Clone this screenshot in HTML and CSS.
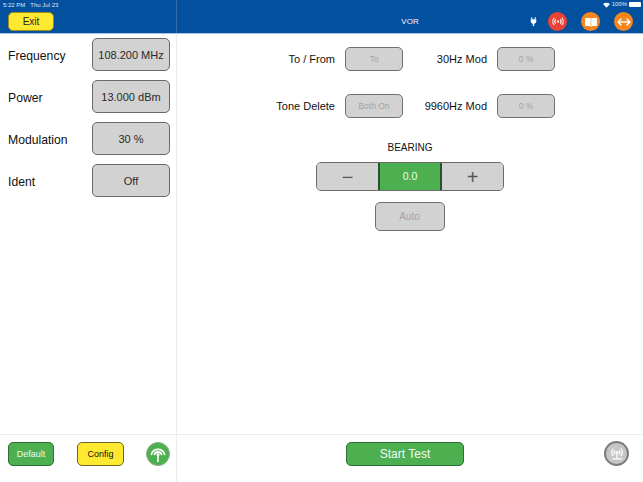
FILE: index.html
```html
<!DOCTYPE html>
<html lang="en">
<head>
<meta charset="utf-8">
<title>VOR</title>
<link rel="stylesheet" href="styles.css">
</head>
<body>
<div class="app">
  <header class="top">
    <div class="top-left">
      <div class="status-left"><span>5:22 PM</span><span>Thu Jul 23</span></div>
      <button class="btn exit">Exit</button>
    </div>
    <div class="top-right">
      <div class="status-right">
        <svg width="7" height="6" viewBox="0 0 9 7"><path d="M4.5 7 L0 2.2 Q4.5 -1 9 2.2 Z" fill="#fff"/></svg>
        <span>100%</span>
        <span class="battery"></span>
      </div>
      <div class="title">VOR</div>
      <div class="icons">
        <svg class="plug" width="7" height="9" viewBox="0 0 8 10"><path d="M2 0v2.5M6 0v2.5" stroke="#fff" stroke-width="1.2"/><path d="M0.8 2.5h6.4v2.5a3.2 3 0 0 1-2.4 2.6V10H3.2V7.6A3.2 3 0 0 1 .8 5z" fill="#fff"/></svg>
        <span class="round red">
          <svg width="14" height="9" viewBox="0 0 16 12" fill="none" stroke="#fff" stroke-width="1.4"><circle cx="8" cy="6" r="1.5" fill="#fff" stroke="none"/><path d="M5 3.2a4 4 0 0 0 0 5.6M11 3.2a4 4 0 0 1 0 5.6M3 1.2a7 7 0 0 0 0 9.6M13 1.2a7 7 0 0 1 0 9.6"/></svg>
        </span>
        <span class="round orange">
          <svg width="12" height="10" viewBox="0 0 13 11" fill="#fff"><path d="M0 1h5.8q.4 0 .4.5V11q-.5-1-1.5-1H0zM13 1H7.2q-.4 0-.4.5V11q.5-1 1.5-1H13z"/></svg>
        </span>
        <span class="round orange">
          <svg width="14" height="8" viewBox="0 0 14 8" fill="none" stroke="#fff" stroke-width="1.4" stroke-linecap="round" stroke-linejoin="round"><path d="M1 4h12M4 1L1 4l3 3M10 1l3 3-3 3"/></svg>
        </span>
      </div>
    </div>
  </header>
  <main class="body">
    <aside class="side">
      <div class="side-rows">
        <div class="side-row"><span class="side-label">Frequency</span><button class="btn field">108.200 MHz</button></div>
        <div class="side-row"><span class="side-label">Power</span><button class="btn field">13.000 dBm</button></div>
        <div class="side-row"><span class="side-label">Modulation</span><button class="btn field">30 %</button></div>
        <div class="side-row"><span class="side-label">Ident</span><button class="btn field">Off</button></div>
      </div>
      <footer class="side-foot">
        <button class="btn small green">Default</button>
        <button class="btn small yellow">Config</button>
        <span class="antenna">
          <svg width="18" height="18" viewBox="0 0 18 18" fill="none" stroke="#fff" stroke-width="1.7" stroke-linecap="round"><path d="M9 10v7" stroke-width="1.6" stroke-linecap="butt"/><circle cx="9" cy="9.5" r="1.6" fill="#fff" stroke="none"/><path d="M5.4 9.5a3.8 3.8 0 0 1 7.2 0M2.4 9.5a6.8 6.8 0 0 1 13.2 0"/></svg>
        </span>
      </footer>
    </aside>
    <section class="content">
      <div class="mods">
        <div class="mod-row">
          <div class="pair"><span class="mod-label">To / From</span><button class="btn mod off">To</button></div>
          <div class="pair"><span class="mod-label">30Hz Mod</span><button class="btn mod off">0 %</button></div>
        </div>
        <div class="mod-row">
          <div class="pair"><span class="mod-label">Tone Delete</span><button class="btn mod off">Both On</button></div>
          <div class="pair"><span class="mod-label">9960Hz Mod</span><button class="btn mod off">0 %</button></div>
        </div>
      </div>
      <div class="bearing">
        <div class="bearing-title">BEARING</div>
        <div class="stepper">
          <button class="step">&minus;</button>
          <button class="step value">0.0</button>
          <button class="step">+</button>
        </div>
        <button class="btn auto off">Auto</button>
      </div>
      <footer class="content-foot">
        <button class="btn start">Start Test</button>
        <span class="remote">
          <svg width="18" height="18" viewBox="0 0 22 22" fill="none" stroke="#fff" stroke-width="1.5"><circle cx="11" cy="9" r="1.6" fill="#fff" stroke="none"/><path d="M8.6 6.6a3.4 3.4 0 0 0 0 4.8M13.4 6.6a3.4 3.4 0 0 1 0 4.8M6.4 4.4a6.5 6.5 0 0 0 0 9.2M15.6 4.4a6.5 6.5 0 0 1 0 9.2M11 10v6.5M5 17h12"/></svg>
        </span>
      </footer>
    </section>
  </main>
</div>
</body>
</html>
```
FILE: styles.css
```css
* { box-sizing: border-box; }
html, body { margin: 0; padding: 0; }
body { width: 643px; height: 482px; overflow: hidden; background: #fff; font-family: "Liberation Sans", Arial, sans-serif; color: #111; }
.app { width: 643px; height: 482px; display: flex; flex-direction: column; }
button { font-family: inherit; padding: 0; margin: 0; }

.top { height: 34px; flex: none; display: flex; background: #03509f; border-bottom: 1px solid #a9c3de; color: #fff; }
.top-left { width: 177px; flex: none; border-right: 1px solid #2e6cad; padding: 2px 0 0 8px; }
.status-left { display: flex; gap: 5px; font-size: 6px; line-height: 6px; color: #dfe8f3; margin-left: -5px; }
.top-right { flex: 1; display: flex; align-items: center; position: relative; padding-top: 9px; }
.status-right { position: absolute; top: 1px; right: 2px; display: flex; align-items: center; gap: 2px; font-size: 6px; line-height: 7px; color: #e8eef6; }
.battery { width: 12px; height: 5px; background: #fff; border-radius: 1px; display: block; }
.title { flex: 1; text-align: center; font-size: 8px; color: #f2f6fb; }
.icons { position: absolute; top: 12px; right: 10px; display: flex; align-items: center; gap: 14px; }
.plug { margin-right: -3px; }
.round { width: 19px; height: 19px; border-radius: 50%; display: flex; align-items: center; justify-content: center; }
.round.red { background: #ea4335; }
.round.orange { background: #f7861e; }

.btn { display: flex; align-items: center; justify-content: center; border: 1px solid #6a6a6a; border-radius: 5px; background: #d2d2d2; color: #222; }
.exit { width: 46px; height: 19px; margin-top: 4px; background: #fde92f; border-color: #a08c1e; font-size: 10px; color: #222; }

.body { flex: 1; display: flex; min-height: 0; }
.side { width: 177px; flex: none; border-right: 1px solid #ececec; display: flex; flex-direction: column; }
.side-rows { flex: 1; padding: 4px 6px 0 8px; display: flex; flex-direction: column; gap: 9px; }
.side-row { height: 33px; display: flex; align-items: center; justify-content: space-between; }
.side-label { font-size: 12.2px; color: #111; padding-top: 2px; }
.field { width: 78px; height: 33px; font-size: 11px; color: #2a2a2a; padding-top: 1px; }
.side-foot { height: 48px; flex: none; border-top: 1px solid #ececec; padding: 7px 0 0 8px; display: flex; align-items: flex-start; }
.small { width: 46px; height: 24px; font-size: 9px; }
.green { background: #4caf50; border-color: #2f6e34; color: #eef8ee; }
.yellow { background: #fde92f; border-color: #6d6326; color: #111; margin-left: 23px; width: 47px; }
.antenna { width: 24px; height: 24px; border-radius: 50%; background: #4caf50; border: 1px solid #8fae91; margin-left: 22px; display: flex; align-items: center; justify-content: center; overflow: hidden; }

.content { flex: 1; display: flex; flex-direction: column; min-width: 0; }
.mods { padding-top: 13px; display: flex; flex-direction: column; gap: 23px; }
.mod-row { display: flex; }
.pair { display: flex; align-items: center; justify-content: flex-end; }
.pair:first-child { width: 226px; }
.pair:last-child { width: 152px; }
.mod-label { font-size: 11px; margin-right: 10px; color: #111; }
.mod { width: 58px; height: 24px; font-size: 8.5px; }
.off { color: #a4a4a4; border-color: #707070; }

.bearing { display: flex; flex-direction: column; align-items: center; width: 466px; margin-top: 24px; flex: 1; }
.bearing-title { font-size: 10px; line-height: 12px; color: #111; }
.stepper { display: flex; width: 188px; height: 29px; margin-top: 8px; border: 1px solid #6a6a6a; border-radius: 5px; overflow: hidden; background: #d2d2d2; }
.step { flex: 1; border: 0; background: #d2d2d2; color: #555; font-size: 20px; line-height: 1; }
.step.value { flex: none; width: 64px; background: #4caf50; color: #f2faf2; font-size: 10.5px; border-left: 2px solid #2f4f32; border-right: 2px solid #2f4f32; }
.auto { width: 70px; height: 29px; margin-top: 11px; font-size: 10px; margin-right: 1px; }

.content-foot { height: 48px; flex: none; border-top: 1px solid #ececec; position: relative; display: flex; justify-content: center; padding: 7px 10px 0 0; align-items: flex-start; }
.start { width: 118px; height: 24px; background: #4caf50; border-color: #2f6e34; color: #f4fbf4; font-size: 12px; }
.remote { position: absolute; right: 14px; top: 6px; width: 25px; height: 25px; border-radius: 50%; background: #c6c6c6; border: 2px solid #7c7c7c; display: flex; align-items: center; justify-content: center; }
```
